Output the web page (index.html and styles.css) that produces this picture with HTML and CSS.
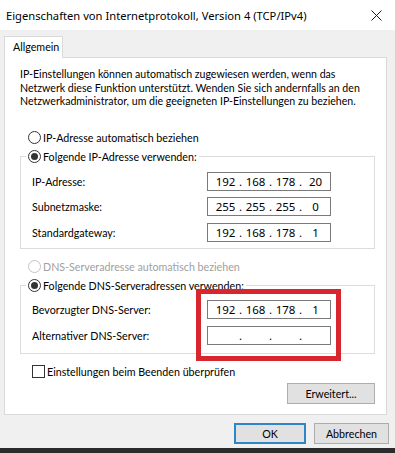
FILE: index.html
```html
<!DOCTYPE html>
<html lang="de">
<head>
    <meta charset="UTF-8">
    <meta name="viewport" content="width=device-width, initial-scale=1.0">
    <title>Eigenschaften von Internetprotokoll, Version 4 (TCP/IPv4)</title>
    <link rel="stylesheet" href="styles.css">
</head>
<body>
    <div class="titlebar">
        <span class="title">Eigenschaften von Internetprotokoll, Version 4 (TCP/IPv4)</span>
        <svg class="close" width="11" height="11" viewBox="0 0 11 11">
            <path d="M0.5 0.5 L10.5 10.5 M10.5 0.5 L0.5 10.5" stroke="#1a1a1a" stroke-width="1" fill="none"/>
        </svg>
    </div>

    <div class="tabs">
        <div class="tab">Allgemein</div>
    </div>

    <div class="panel">
        <p class="intro">IP-Einstellungen können automatisch zugewiesen werden, wenn das<br>Netzwerk diese Funktion unterstützt. Wenden Sie sich andernfalls an den<br>Netzwerkadministrator, um die geeigneten IP-Einstellungen zu beziehen.</p>

        <div class="option first">
            <span class="radio"></span>IP-Adresse automatisch beziehen
        </div>

        <fieldset class="group">
            <legend class="option"><span class="radio checked"></span>Folgende IP-Adresse verwenden:</legend>
            <div class="field">
                <span class="label">IP-Adresse:</span>
                <div class="ip"><span>192</span><i>.</i><span>168</span><i>.</i><span>178</span><i>.</i><span>20</span></div>
            </div>
            <div class="field">
                <span class="label">Subnetzmaske:</span>
                <div class="ip"><span>255</span><i>.</i><span>255</span><i>.</i><span>255</span><i>.</i><span>0</span></div>
            </div>
            <div class="field">
                <span class="label">Standardgateway:</span>
                <div class="ip"><span>192</span><i>.</i><span>168</span><i>.</i><span>178</span><i>.</i><span>1</span></div>
            </div>
        </fieldset>

        <div class="option disabled">
            <span class="radio"></span>DNS-Serveradresse automatisch beziehen
        </div>

        <fieldset class="group dns">
            <legend class="option"><span class="radio checked"></span>Folgende DNS-Serveradressen verwenden:</legend>
            <div class="field">
                <span class="label">Bevorzugter DNS-Server:</span>
                <div class="ip"><span>192</span><i>.</i><span>168</span><i>.</i><span>178</span><i>.</i><span>1</span></div>
            </div>
            <div class="field">
                <span class="label">Alternativer DNS-Server:</span>
                <div class="ip"><span></span><i>.</i><span></span><i>.</i><span></span><i>.</i><span></span></div>
            </div>
        </fieldset>

        <div class="option check">
            <span class="checkbox"></span>Einstellungen beim Beenden überprüfen
        </div>

        <div class="advanced">
            <button class="btn wide">Erweitert...</button>
        </div>
    </div>

    <div class="footer">
        <button class="btn default">OK</button>
        <button class="btn">Abbrechen</button>
    </div>

    <div class="taskbar"></div>

    <!-- rote Markierung um die DNS-Felder -->
    <div class="highlight"></div>
</body>
</html>
```

FILE: styles.css
```css
* { box-sizing: border-box; }

body {
    margin: 0;
    width: 395px;
    height: 453px;
    overflow: hidden;
    background: #f0f0f0;
    font-family: Lato, "Noto Sans", sans-serif;
    font-size: 10.7px;
    color: #000;
    display: flex;
    flex-direction: column;
    position: relative;
}

.titlebar {
    height: 30px;
    background: #fff;
    display: flex;
    align-items: center;
    justify-content: space-between;
    padding: 0 13px 0 6px;
}
.title {
    font-family: "Noto Sans", sans-serif;
    font-size: 11.2px;
}
.close { display: block; }

.tabs {
    margin-top: 6px;
    padding-left: 4px;
    display: flex;
}
.tab {
    position: relative; /* über den Rand des Panels */
    z-index: 1;
    height: 22px;
    width: 59px;
    margin-bottom: -1px;
    padding: 3px 0 0 8px;
    background: #fff;
    border: 1px solid #d9d9d9;
    border-bottom: none;
}

.panel {
    margin: 0 8px 0 4px;
    height: 358px;
    background: #fff;
    border: 1px solid #d9d9d9;
    padding: 10px 11px 0 15px;
}

.intro {
    margin: 0;
    font-size: 10.6px;
    line-height: 13.5px;
    white-space: nowrap;
}

.option {
    display: flex;
    align-items: center;
    height: 15px;
    line-height: 15px;
    white-space: nowrap;
}
.option.first { margin: 21px 0 0 8px; }
.option.disabled { color: #a0a0a0; margin: 10px 0 0 8px; }
.option.check { margin: 10px 0 0 12px; }

.radio {
    width: 13px;
    height: 13px;
    border: 1px solid #333;
    border-radius: 50%;
    background: #fff;
    margin-right: 2px;
    display: flex;
    align-items: center;
    justify-content: center;
    flex: none;
}
.radio.checked::after {
    content: "";
    width: 7px;
    height: 7px;
    border-radius: 50%;
    background: #333;
}
.disabled .radio { border-color: #c4c4c4; }

.checkbox {
    width: 13px;
    height: 13px;
    border: 1px solid #333;
    background: #fff;
    margin-right: 2px;
    flex: none;
}

.group {
    margin: 4px 0 0 0;
    padding: 0 0 6px 5px;
    border: 1px solid #dcdcdc;
}
.group.dns { padding-bottom: 8px; }
.group legend {
    padding: 0 2px 0 2px;
}

.field {
    display: flex;
    align-items: center;
    height: 19px;
    margin: 6.5px 0 0 6px;
}
.field:first-of-type { margin-top: 8px; }
.group.dns .field { margin-top: 7px; }
.group.dns .field:first-of-type { margin-top: 7.5px; }

.label { width: 175px; }

.ip {
    width: 124px;
    height: 19px;
    border: 1px solid #7a7a7a;
    display: flex;
    align-items: center;
    padding-left: 5.5px;
    line-height: 17px;
    font-family: "Noto Sans", sans-serif;
    font-size: 11.5px;
}
.ip span {
    width: 24px;
    text-align: center;
}
.ip i {
    font-style: normal;
    width: 6px;
    text-align: center;
}

.advanced {
    display: flex;
    justify-content: flex-end;
    margin-top: 3.5px;
}

.btn {
    font-family: inherit;
    font-size: 10.7px;
    color: #000;
    height: 21px;
    padding: 0;
    background: #e1e1e1;
    border: 1px solid #adadad;
    width: 75px;
}
.btn.wide { width: 88px; }
.btn.default {
    width: 72px;
    border: 2px solid #2f86c4;
}

.footer {
    display: flex;
    justify-content: flex-end;
    gap: 8px;
    padding: 8px 6px 0 0;
}

.taskbar {
    margin-top: auto;
    height: 5px;
    background: #2b2b2b;
}

.highlight {
    position: absolute;
    left: 196px;
    top: 289px;
    width: 145px;
    height: 72px;
    border: 5px solid #d7262e;
}
```
